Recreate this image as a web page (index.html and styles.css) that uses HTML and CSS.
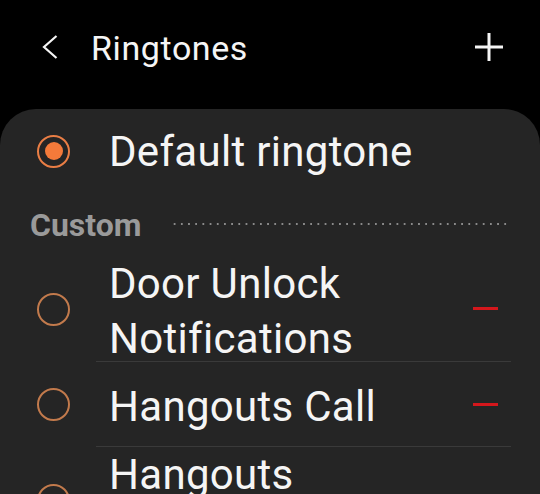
FILE: index.html
```html
<!DOCTYPE html>
<html lang="en">
<head>
    <meta charset="UTF-8">
    <meta name="viewport" content="width=device-width, initial-scale=1.0">
    <title>Ringtones</title>
    <link rel="stylesheet" href="styles.css">
</head>
<body>
    <header class="topbar">
        <button class="back" aria-label="Back">
            <svg width="16" height="24" viewBox="0 0 16 24">
                <polyline points="14.5,1 2,12 14.5,23" fill="none" stroke="#f5f5f5" stroke-width="2.2"/>
            </svg>
        </button>
        <h1 class="title">Ringtones</h1>
        <button class="add" aria-label="Add">
            <svg width="30" height="30" viewBox="0 0 30 30">
                <line x1="15" y1="1" x2="15" y2="29" stroke="#f5f5f5" stroke-width="3"/>
                <line x1="1" y1="15" x2="29" y2="15" stroke="#f5f5f5" stroke-width="3"/>
            </svg>
        </button>
    </header>

    <main class="card">
        <div class="item item-default">
            <div class="item-radio"><span class="radio checked"></span></div>
            <div class="item-body no-line">
                <span class="name">Default ringtone</span>
            </div>
        </div>

        <div class="section">
            <span class="section-title">Custom</span>
            <span class="dots"></span>
        </div>

        <div class="item">
            <div class="item-radio"><span class="radio"></span></div>
            <div class="item-body">
                <span class="name">Door Unlock Notifications</span>
                <span class="remove"></span>
            </div>
        </div>

        <div class="item">
            <div class="item-radio"><span class="radio"></span></div>
            <div class="item-body">
                <span class="name">Hangouts Call</span>
                <span class="remove"></span>
            </div>
        </div>

        <div class="item">
            <div class="item-radio"><span class="radio"></span></div>
            <div class="item-body">
                <span class="name">Hangouts Message</span>
                <span class="remove"></span>
            </div>
        </div>
    </main>
</body>
</html>
```

FILE: styles.css
```css
body {
    font-family: Roboto, "Liberation Sans", sans-serif;
    margin: 0;
    padding: 0;
    background-color: #000;
    color: #f5f5f5;
    overflow: hidden;
}

button {
    background: none;
    border: 0;
    padding: 0;
}

.topbar {
    display: flex;
    align-items: center;
    height: 93px;
    padding: 0 36px 16px 42px;
}

.back {
    display: flex;
    width: 16px;
    height: 24px;
    margin-right: 33px;
}

.title {
    flex: 1;
    margin: 0;
    font-size: 34px;
    font-weight: 400;
    line-height: 40px;
    letter-spacing: 0.6px;
    padding-top: 3px;
}

.add {
    display: flex;
    width: 30px;
    height: 30px;
}

.card {
    background-color: #252525;
    border-radius: 36px 36px 0 0;
    min-height: 400px;
}

.item {
    display: flex;
    align-items: stretch;
}

.item-default {
    height: 84px;
}

.item-radio {
    display: flex;
    align-items: center;
    width: 59px;
    padding-left: 37px;
}

.radio {
    display: block;
    box-sizing: border-box;
    width: 33px;
    height: 33px;
    border: 2px solid #c27a4c;
    border-radius: 50%;
}

.radio.checked {
    border-color: #ea7e45;
    position: relative;
}

.radio.checked::after {
    content: "";
    position: absolute;
    left: 5.5px;
    top: 5.5px;
    width: 18px;
    height: 18px;
    border-radius: 50%;
    background-color: #f47a3a;
}

.item-body {
    flex: 1;
    display: flex;
    align-items: center;
    min-height: 84px;
    margin-right: 29px;
    padding-left: 13px;
    border-bottom: 1px solid #3a3a3a;
}

.item-body.no-line {
    border-bottom: 0;
}

.name {
    flex: 1;
    font-size: 42px;
    line-height: 55px;
    letter-spacing: 0.3px;
    margin-bottom: -5px;
    padding-right: 20px;
}

.item-default .name {
    margin: 0;
}

.remove {
    width: 25px;
    height: 3px;
    margin-right: 13px;
    background-color: #d4171c;
}

.section {
    display: flex;
    align-items: center;
    height: 63px;
    padding: 0 30px;
}

.section-title {
    font-size: 32px;
    font-weight: 700;
    line-height: 40px;
    color: #9a9a9a;
    margin-right: 29px;
}

.dots {
    flex: 1;
    height: 2px;
    margin-top: -2px;
    background-image: radial-gradient(circle, #8a8a8a 0.9px, transparent 1.1px);
    background-size: 7.2px 2px;
}
```
